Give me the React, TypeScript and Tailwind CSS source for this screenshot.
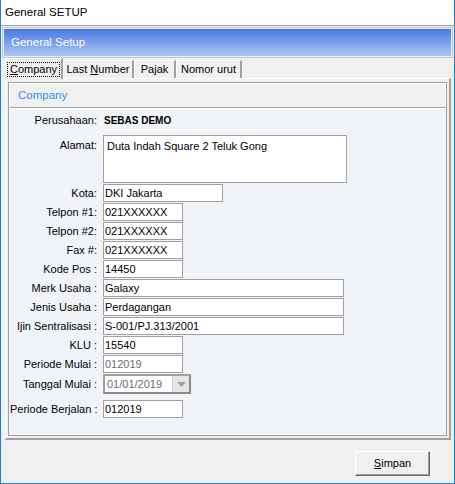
import React from 'react';

const FONT = { fontFamily: '"Liberation Sans", Arial, sans-serif' };

function Field({ label, value, width, disabled = false, top = 1 }: { label: string; value: string; width: number; disabled?: boolean; top?: number }) {
  return (
    <div className="flex items-center" style={{ marginTop: top }}>
      <div className="w-[88px] text-right pr-[1px] whitespace-nowrap">{label}</div>
      <div
        className={`ml-[5px] h-[18px] border border-[#a0a0a0] bg-white pl-[1px] flex items-center ${disabled ? 'text-[#6d6d6d]' : 'text-black'}`}
        style={{ width }}
      >
        {value}
      </div>
    </div>
  );
}

function Tab({ label, hot, width, active = false }: { label: string; hot?: number; width: number; active?: boolean }) {
  const text =
    hot === undefined ? (
      <span>{label}</span>
    ) : (
      <span>
        {label.slice(0, hot)}
        <span className="underline">{label[hot]}</span>
        {label.slice(hot + 1)}
      </span>
    );
  if (active) {
    return (
      <div
        className="h-[21px] px-[1px] border-t border-l border-white border-r-2 border-r-[#a0a0a0] bg-[#f0f0f0] flex items-center -mb-[1px] relative z-10"
        style={{ width }}
      >
        <div className="flex-1 border border-dotted border-black h-[15px] flex items-center justify-center">{text}</div>
      </div>
    );
  }
  return (
    <div
      className="h-[18px] border-t border-l border-white border-r-2 border-r-[#a0a0a0] flex items-center justify-center"
      style={{ width }}
    >
      {text}
    </div>
  );
}

export default function App() {
  return (
    <div className="w-[455px] h-[484px] bg-[#f0f0f0] border-x border-b border-[#1883d7] flex flex-col text-[11px] text-black" style={FONT}>
      <div className="h-[25px] bg-white flex items-center pl-[4px] text-[11.5px]">General SETUP</div>
      <div className="flex-1 flex flex-col border-t border-[#a0a0a0] px-[1px] pt-[1px]">
        <div className="border border-[#c4c4c4] p-[1px]">
          <div className="h-[27px] bg-gradient-to-b from-[#4877e3] to-[#aec6f5] text-white text-[11.5px] flex items-center pl-[7px]">
            General Setup
          </div>
        </div>

        <div className="flex items-end h-[20px] ml-[3px]">
          <Tab label="Company" hot={0} width={58} active />
          <Tab label="Last Number" hot={5} width={71} />
          <Tab label="Pajak" width={42} />
          <Tab label="Nomor urut" width={66} />
        </div>

        <div className="ml-[3px] mr-[2px] h-[362px] border-t border-l border-white border-r-2 border-b-2 border-r-[#a0a0a0] border-b-[#a0a0a0] pt-[3px] pl-[2px] pr-[2px] pb-[2px] flex flex-col">
          <div className="border border-[#a0a0a0] flex-1 flex flex-col">
            <div className="h-[25px] border border-white border-b-[#a0a0a0] bg-[#f0f0f0] flex items-center pl-[8px] text-[11.5px] text-[#2f8cff]">
              Company
            </div>
            <div className="flex-1 border-t border-white bg-[#f0f4f8] pl-[1px] flex flex-col">
              <div className="flex items-center h-[18px] mt-[2px]">
                <div className="w-[88px] text-right pr-[1px]">Perusahaan:</div>
                <div className="ml-[6px] font-bold text-[10px]">SEBAS DEMO</div>
              </div>
              <div className="flex items-start mt-[6px]">
                <div className="w-[88px] text-right pr-[1px] pt-[2px]">Alamat:</div>
                <div className="ml-[5px] w-[244px] h-[48px] border border-[#a0a0a0] bg-white pl-[3px] pt-[2px]">
                  Duta Indah Square 2 Teluk Gong
                </div>
              </div>
              <Field label="Kota:" value="DKI Jakarta" width={120} />
              <Field label="Telpon #1:" value="021XXXXXX" width={80} />
              <Field label="Telpon #2:" value="021XXXXXX" width={80} />
              <Field label="Fax #:" value="021XXXXXX" width={80} />
              <Field label="Kode Pos :" value="14450" width={80} />
              <Field label="Merk Usaha :" value="Galaxy" width={241} />
              <Field label="Jenis Usaha :" value="Perdagangan" width={241} />
              <Field label="Ijin Sentralisasi :" value="S-001/PJ.313/2001" width={241} />
              <Field label="KLU :" value="15540" width={80} />
              <Field label="Periode Mulai :" value="012019" width={80} disabled />
              <div className="flex items-center mt-[1px]">
                <div className="w-[88px] text-right pr-[1px]">Tanggal Mulai :</div>
                <div className="ml-[5px] w-[88px] h-[20px] border-2 border-[#a0a0a0] border-r-[#8a8a8a] border-b-[#8a8a8a] bg-white flex items-center">
                  <div className="flex-1 pl-[2px] text-[#6d6d6d]">01/01/2019</div>
                  <div className="w-[17px] h-full bg-[#e6e6e6] border-l border-[#d0d0d0] flex items-center justify-center">
                    <svg width="9" height="5" viewBox="0 0 9 5">
                      <path d="M0 0 H9 L4.5 5 Z" fill="#a0a0a0" />
                    </svg>
                  </div>
                </div>
              </div>
              <Field label="Periode Berjalan :" value="012019" width={80} top={6} />
            </div>
          </div>
        </div>

        <div className="flex-1 flex justify-end items-start pt-[11px] pr-[23px]">
          <button className="w-[75px] h-[25px] bg-[#f0f0f0] border border-t-white border-l-white border-r-[#696969] border-b-[#696969] shadow-[inset_-1px_-1px_0_#a0a0a0] flex items-center justify-center">
            <span>
              <span className="underline">S</span>impan
            </span>
          </button>
        </div>
      </div>
    </div>
  );
}
